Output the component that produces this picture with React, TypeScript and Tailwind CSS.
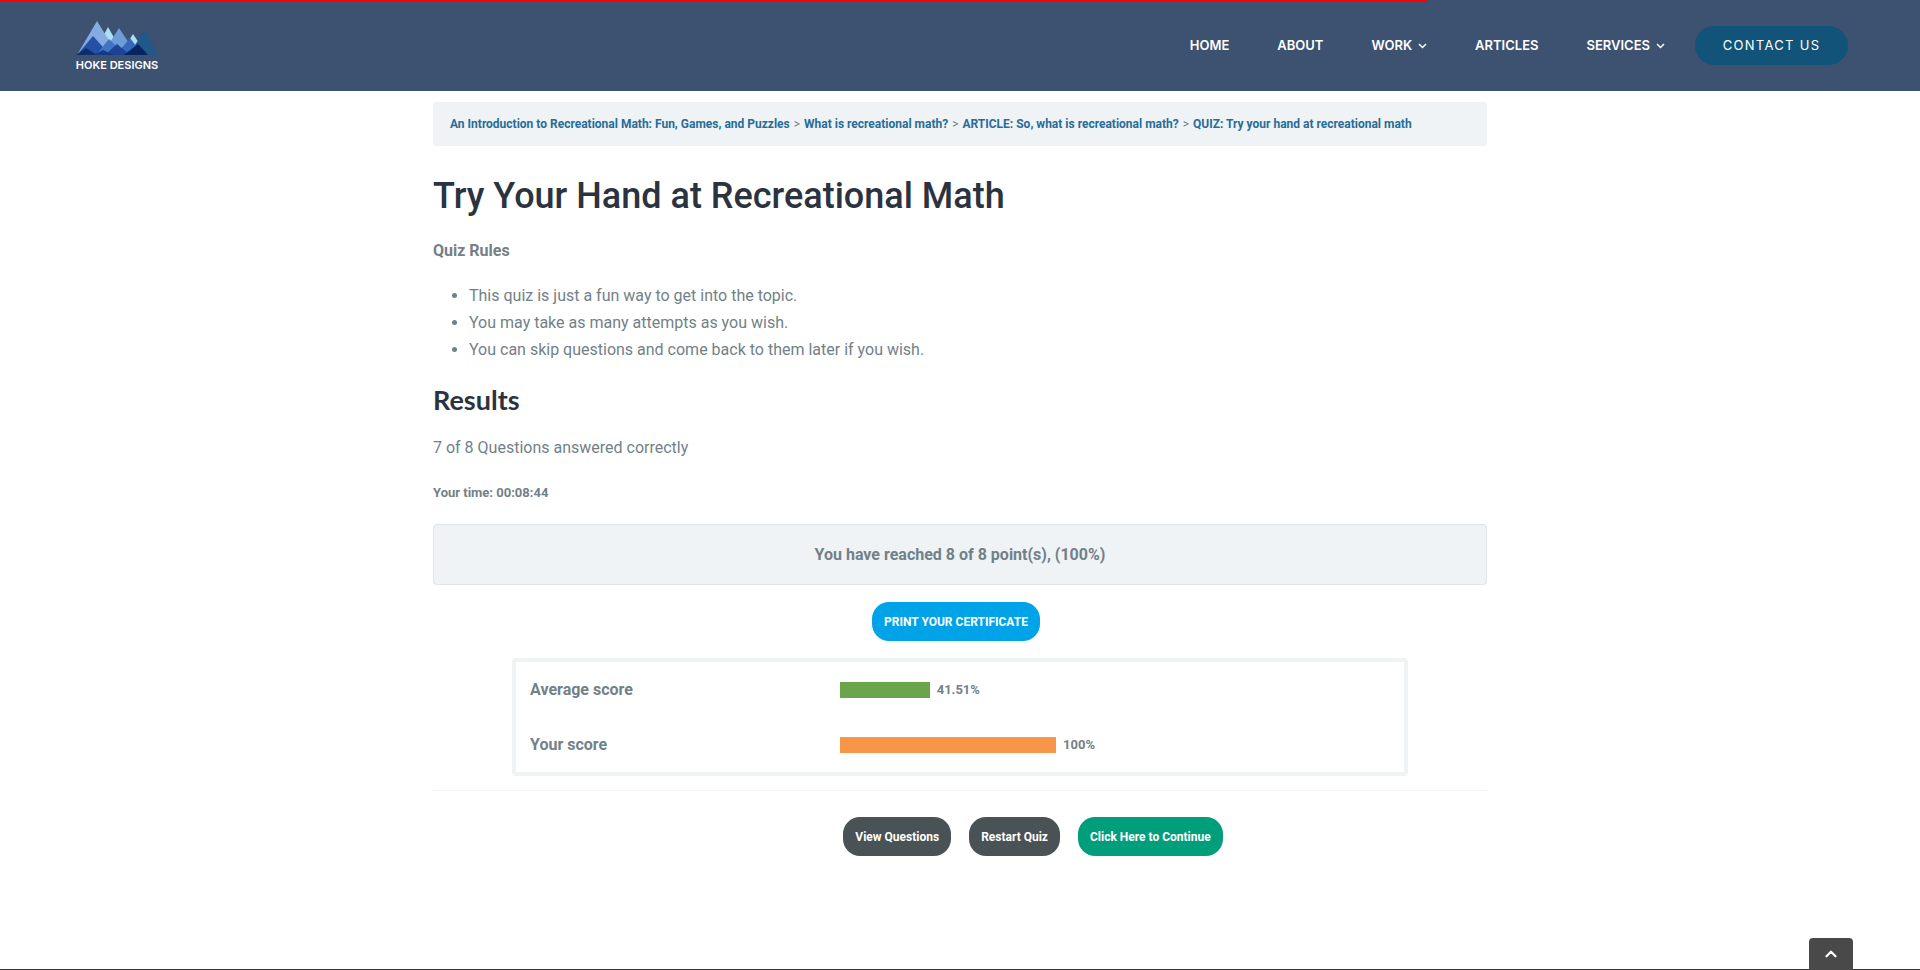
import { ChevronUp } from "lucide-react";

const navLinks = [
  { label: "Home", menu: false },
  { label: "About", menu: false },
  { label: "Work", menu: true },
  { label: "Articles", menu: false },
  { label: "Services", menu: true },
];

const crumbs = [
  "An Introduction to Recreational Math: Fun, Games, and Puzzles",
  "What is recreational math?",
  "ARTICLE: So, what is recreational math?",
  "QUIZ: Try your hand at recreational math",
];

const rules = [
  "This quiz is just a fun way to get into the topic.",
  "You may take as many attempts as you wish.",
  "You can skip questions and come back to them later if you wish.",
];

const scores = [
  { label: "Average score", value: 41.51, color: "bg-[#6aa54c]" },
  { label: "Your score", value: 100, color: "bg-[#f79646]" },
];

const pill = "h-[39px] rounded-[17px] px-3 text-xs font-bold text-white";

function Logo() {
  return (
    <a href="#" className="flex flex-col items-center gap-1">
      <svg viewBox="0 0 84 34" className="h-[34px] w-[84px]" aria-hidden="true">
        <polygon points="33,6 18,34 49,34" fill="#a9def3" />
        <polygon points="58,13 45,34 72,34" fill="#a9def3" />
        <polygon points="22,0 2,34 43,34" fill="#85abe0" />
        <polygon points="44,7 27,34 62,34" fill="#6f9bd8" />
        <polygon points="70,8 54,34 83,34" fill="#21588a" />
        <polygon points="18,15 2,34 35,34" fill="#2450a5" />
        <polygon points="34,18 21,34 50,34" fill="#3f74c4" />
        <polygon points="55,17 41,34 68,34" fill="#3568b8" />
        <polygon points="42,23 30,34 55,34" fill="#1c4397" />
        <polygon points="11,27 1,34 22,34" fill="#0c2f6c" />
        <polygon points="28,29 19,34 39,34" fill="#143a86" />
        <polygon points="63,23 49,34 73,34" fill="#082561" />
      </svg>
      <span className="font-['Inter',sans-serif] text-[11px] leading-3 font-semibold whitespace-nowrap text-white">
        HOKE DESIGNS
      </span>
    </a>
  );
}

function MenuChevron() {
  return (
    <svg viewBox="0 0 9 6" className="h-1.5 w-[9px]" fill="none" aria-hidden="true">
      <path d="M1 1l3.5 3.5L8 1" stroke="currentColor" strokeWidth="1.5" />
    </svg>
  );
}

function Header() {
  return (
    <header className="relative flex h-[91px] items-center justify-between bg-[#3d5170] pr-[72px] pl-[75px]">
      <div className="absolute top-0 left-0 h-0.5 w-[74.3%] bg-[#ff0000]" />
      <Logo />
      <div className="flex items-center gap-[30px]">
        <nav className="flex gap-12 font-['Inter',sans-serif] text-[13px] font-semibold text-white uppercase">
          {navLinks.map((l) => (
            <a key={l.label} href="#" className="flex items-center gap-1.5">
              {l.label}
              {l.menu && <MenuChevron />}
            </a>
          ))}
        </nav>
        <a
          href="#"
          className="flex h-[39px] w-[153px] items-center justify-center rounded-full bg-[#115379] font-['Inter',sans-serif] text-[13px] tracking-widest text-white"
        >
          CONTACT US
        </a>
      </div>
    </header>
  );
}

export default function App() {
  return (
    <div className="flex min-h-screen flex-col bg-white font-['Roboto',sans-serif] text-base leading-[27px] text-[#728188]">
      <Header />
      <main className="mx-auto w-full max-w-[1054px] grow pt-[11px]">
        <nav aria-label="Breadcrumb" className="flex h-11 items-center gap-1 rounded-[4px] bg-[#eff3f6] px-[17px] text-xs">
          {crumbs.map((c, i) => (
            <span key={c} className="flex gap-1">
              {i > 0 && <span>&gt;</span>}
              <a href="#" className="font-bold text-[#286c99]">{c}</a>
            </span>
          ))}
        </nav>

        <h1 className="mt-[27px] text-[36px] leading-[46px] font-medium text-[#2c3340]">Try Your Hand at Recreational Math</h1>
        <p className="mt-[18px] font-bold">Quiz Rules</p>
        <ul className="mt-[18px] list-disc pl-9">
          {rules.map((r) => (
            <li key={r}>{r}</li>
          ))}
        </ul>

        <h2 className="mt-[19px] font-['Lato',sans-serif] text-[27px] leading-9 font-bold text-[#2c3340]">Results</h2>
        <p className="mt-4">7 of 8 Questions answered correctly</p>
        <p className="mt-[18px] text-[13px] font-bold">Your time: 00:08:44</p>

        <p className="mt-[18px] flex h-[61px] items-center justify-center rounded-[4px] border border-[#dfe4e8] bg-[#eff3f6] font-bold">
          You have reached 8 of 8 point(s), (100%)
        </p>

        <div className="mt-[17px] flex justify-center pr-2">
          <button type="button" className={pill + " bg-[#00a2e8]"}>PRINT YOUR CERTIFICATE</button>
        </div>

        <table className="mx-auto mt-[17px] w-[85%] border-separate border-spacing-0 rounded-[4px] border-4 border-[#eff3f6] text-left">
          <tbody>
            {scores.map((s) => (
              <tr key={s.label} className="h-[55px]">
                <th scope="row" className="w-[324px] pl-[14px] font-bold">{s.label}</th>
                <td>
                  <div className="flex items-center gap-[7px]">
                    <div className={"h-4 shrink-0 " + s.color} style={{ width: (216 * s.value) / 100 }} />
                    <span className="text-[13px] font-bold">{s.value}%</span>
                  </div>
                </td>
              </tr>
            ))}
          </tbody>
        </table>

        <hr className="mt-[14px] border-[#eff3f6]" />

        <div className="mt-[26px] flex justify-center gap-[18px] pl-[146px]">
          <button type="button" className={pill + " bg-[#495255]"}>View Questions</button>
          <button type="button" className={pill + " bg-[#495255]"}>Restart Quiz</button>
          <button type="button" className={pill + " bg-[#019e7c]"}>Click Here to Continue</button>
        </div>
      </main>
      <footer className="h-px bg-[#3b3437]" />
      <button
        type="button"
        aria-label="Back to top"
        className="fixed right-[67px] bottom-0 flex h-8 w-11 items-center justify-center rounded-t-[4px] bg-[#494949] text-white"
      >
        <ChevronUp size={18} strokeWidth={3} aria-hidden="true" />
      </button>
    </div>
  );
}
